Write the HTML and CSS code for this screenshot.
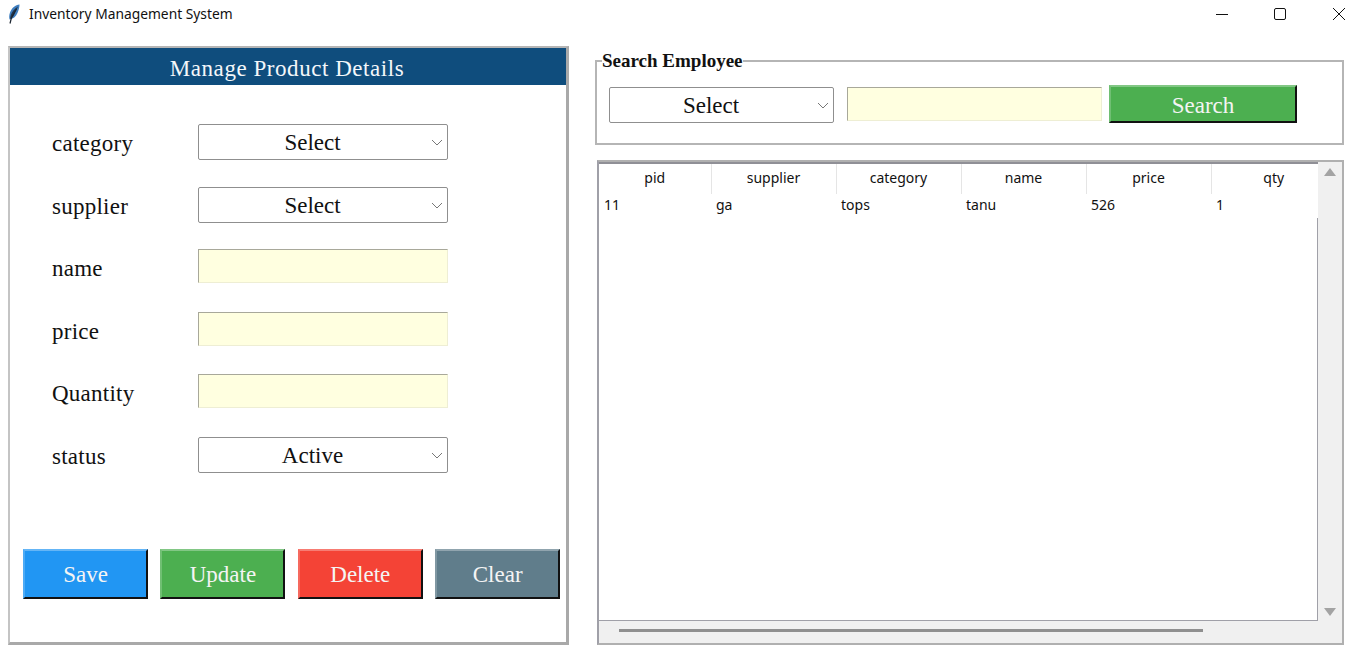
FILE: index.html
```html
<!DOCTYPE html>
<html lang="en">
<head>
    <meta charset="UTF-8">
    <meta name="viewport" content="width=device-width, initial-scale=1.0">
    <title>Inventory Management System</title>
    <link rel="stylesheet" href="styles.css">
</head>
<body>
    <header class="titlebar">
        <svg class="feather" width="14" height="20" viewBox="0 0 14 20">
            <path d="M12.5 0.5 C8.5 1 4.5 4 3 8.5 C2 11.5 2 13.5 2.6 15.5 C6 15 9 12.5 10.5 9 C11.8 6 12.5 3 12.5 0.5 Z" fill="#3f7fc0"/>
            <path d="M11 2.5 C7.5 4.5 5 7.5 3.8 11 C3.3 12.6 3.2 14 3.4 15 C6 14 7 11.5 8 9 C9 6.5 10.3 4.5 11 2.5 Z" fill="#22364e"/>
            <path d="M9.5 5 L4.5 13.5 L3 19.5" fill="none" stroke="#1c2530" stroke-width="1.2"/>
        </svg>
        <span class="app-title">Inventory Management System</span>
        <div class="window-controls">
            <svg width="12" height="12" viewBox="0 0 12 12"><path d="M0 6.5 H12" stroke="#111" fill="none"/></svg>
            <svg width="12" height="12" viewBox="0 0 12 12"><rect x="0.5" y="0.5" width="11" height="11" rx="1.5" stroke="#111" fill="none"/></svg>
            <svg class="close-icon" width="12" height="12" viewBox="0 0 12 12"><path d="M0 0 L12 12 M12 0 L0 12" stroke="#111" fill="none"/></svg>
        </div>
    </header>

    <main class="content">
        <!-- Product form -->
        <section class="product-panel">
            <h1 class="panel-title">Manage Product Details</h1>
            <form class="product-form">
                <label class="form-label">category</label>
                <div class="select-wrap">
                    <select class="select"><option>Select</option></select>
                    <svg class="chevron" width="12" height="7" viewBox="0 0 12 7"><path d="M1 1 L6 6 L11 1" fill="none" stroke="#777"/></svg>
                </div>
                <label class="form-label">supplier</label>
                <div class="select-wrap">
                    <select class="select"><option>Select</option></select>
                    <svg class="chevron" width="12" height="7" viewBox="0 0 12 7"><path d="M1 1 L6 6 L11 1" fill="none" stroke="#777"/></svg>
                </div>
                <label class="form-label">name</label>
                <input class="text-input" type="text">
                <label class="form-label">price</label>
                <input class="text-input" type="text">
                <label class="form-label">Quantity</label>
                <input class="text-input" type="text">
                <label class="form-label">status</label>
                <div class="select-wrap">
                    <select class="select"><option>Active</option></select>
                    <svg class="chevron" width="12" height="7" viewBox="0 0 12 7"><path d="M1 1 L6 6 L11 1" fill="none" stroke="#777"/></svg>
                </div>
            </form>
            <div class="button-row">
                <button class="btn btn-blue" type="button">Save</button>
                <button class="btn btn-green" type="button">Update</button>
                <button class="btn btn-red" type="button">Delete</button>
                <button class="btn btn-grey" type="button">Clear</button>
            </div>
        </section>

        <div class="right-column">
            <!-- Search box -->
            <fieldset class="search-box">
                <legend class="search-legend">Search Employee</legend>
                <div class="select-wrap search-select">
                    <select class="select"><option>Select</option></select>
                    <svg class="chevron" width="12" height="7" viewBox="0 0 12 7"><path d="M1 1 L6 6 L11 1" fill="none" stroke="#777"/></svg>
                </div>
                <input class="text-input search-input" type="text">
                <button class="btn btn-green search-btn" type="button">Search</button>
            </fieldset>

            <!-- Product table -->
            <section class="table-frame">
                <div class="table-area">
                    <table class="product-table">
                        <thead>
                            <tr><th>pid</th><th>supplier</th><th>category</th><th>name</th><th>price</th><th>qty</th></tr>
                        </thead>
                        <tbody>
                            <tr><td>11</td><td>ga</td><td>tops</td><td>tanu</td><td>526</td><td>1</td></tr>
                        </tbody>
                    </table>
                </div>
                <div class="vscroll">
                    <svg width="12" height="8" viewBox="0 0 12 8"><path d="M6 0 L12 8 H0 Z" fill="#a3a3a3"/></svg>
                    <svg width="12" height="8" viewBox="0 0 12 8"><path d="M0 0 H12 L6 8 Z" fill="#a3a3a3"/></svg>
                </div>
                <div class="hscroll"><div class="hscroll-thumb"></div></div>
                <div class="scroll-corner"></div>
            </section>
        </div>
    </main>
</body>
</html>
```

FILE: styles.css
```css
* {
    box-sizing: border-box;
}

html, body {
    height: 100%;
}

body {
    margin: 0;
    background: #fff;
    color: #111;
    font-family: "Liberation Serif", serif;
    overflow: hidden;
}

.titlebar {
    height: 27px;
    display: flex;
    align-items: center;
    padding-left: 7px;
}

.app-title {
    margin-left: 8px;
    font-family: "Noto Sans", sans-serif;
    font-size: 13.8px;
    color: #111;
}

.window-controls {
    margin-left: auto;
    display: flex;
    gap: 46px;
    padding-right: 16px;
}

.close-icon {
    margin-left: 1px;
}

.content {
    display: grid;
    grid-template-columns: 561px 749px;
    column-gap: 26px;
    padding: 19px 0 0 8px;
}

/* left panel */
.product-panel {
    height: 599px;
    border: 2px solid #a9a9a9;
    border-top-color: #b5b5b5;
    border-left-color: #c4c4c4;
    border-right-width: 3px;
    border-bottom-width: 3px;
    display: flex;
    flex-direction: column;
}

.panel-title {
    margin: 0;
    height: 37px;
    line-height: 41px;
    padding-right: 2px;
    background: #0f4d7d;
    color: #f4f7fa;
    font-size: 23px;
    font-weight: normal;
    letter-spacing: 0.55px;
    text-align: center;
}

.product-form {
    display: grid;
    grid-template-columns: 146px 250px;
    grid-auto-rows: 36px;
    row-gap: 26.5px;
    align-items: center;
    padding: 39px 0 0 42px;
}

.form-label {
    padding-top: 4px;
    font-size: 23px;
    letter-spacing: 0.25px;
    color: #111;
}

.select-wrap {
    position: relative;
    height: 36px;
}

.select {
    appearance: none;
    width: 100%;
    height: 100%;
    padding: 1px 21px 0 0;
    background: #fff;
    border: 1px solid #8f8f8f;
    border-radius: 2px;
    font-family: inherit;
    font-size: 23px;
    color: #111;
    text-align-last: center;
}

.chevron {
    position: absolute;
    top: 15px;
    right: 5px;
}

.text-input {
    height: 34px;
    width: 100%;
    background: #ffffe0;
    border: 1px solid #eeeed4;
    border-top-color: #a8a89a;
    border-left-color: #a8a89a;
    align-self: start;
}

.button-row {
    display: flex;
    gap: 12.4px;
    padding: 76px 0 0 13px;
}

.btn {
    width: 125px;
    height: 50px;
    padding: 2px 0 0;
    border: 2px solid;
    border-color: rgba(255, 255, 255, 0.3) #111 #111 rgba(255, 255, 255, 0.2);
    border-radius: 0;
    color: #f4f4f4;
    font-family: inherit;
    font-size: 23px;
}

.btn-blue { background: #2196f3; }
.btn-green { background: #4caf50; }
.btn-red { background: #f44336; }
.btn-grey { background: #607d8b; }

/* right side */
.right-column {
    display: flex;
    flex-direction: column;
    min-width: 0;
}

.search-box {
    margin: 4px 0 15px 0;
    height: 95px;
    padding: 13px 0 0 12px;
    border: 2px solid #b5b5b5;
    border-radius: 0;
    display: flex;
    align-items: flex-start;
    min-width: 0;
}

.search-legend {
    padding: 0;
    margin-left: -7px;
    font-size: 19px;
    font-weight: bold;
    line-height: 22px;
}

.search-select {
    width: 225px;
    margin-top: 2px;
}

.search-input {
    width: 255px;
    margin: 2px 7px 0 13px;
}

.search-btn {
    width: 188px;
    height: 38px;
    padding-top: 4px;
}

.table-frame {
    height: 485px;
    margin-left: 2px;
    border: 2px solid #b0b0b0;
    border-left-color: #a0a0a8;
    background: #f0f0f0;
    display: grid;
    grid-template-columns: minmax(0, 1fr) 24px;
    grid-template-rows: minmax(0, 1fr) 22px;
}

.table-area {
    position: relative;
    overflow: hidden;
    background: #fff;
    border-top: 2px solid #8f8f96;
    border-bottom: 1px solid #a0a0a8;
}

/* the line beside the rows starts under the first row */
.table-area::after {
    content: "";
    position: absolute;
    top: 54px;
    bottom: 0;
    right: 0;
    width: 1px;
    background: #a0a0a8;
}

.product-table {
    width: 737px;
    border-collapse: collapse;
    table-layout: fixed;
    font-family: "Noto Sans", sans-serif;
    font-size: 14px;
}

.product-table th {
    width: 125px;
    height: 30px;
    padding: 0 0 4px;
    font-weight: normal;
    text-align: center;
    border-right: 1px solid #e5e5e5;
}

.product-table th:first-child {
    width: 112px;
}

.product-table th:last-child {
    border-right: 0;
}

.product-table td {
    height: 24px;
    padding: 0 0 4px 5px;
    background: #fff;
}

.vscroll {
    display: flex;
    flex-direction: column;
    justify-content: space-between;
    align-items: center;
    padding: 6px 0 5px;
}

.hscroll {
    padding: 8px 0 0 20px;
}

.hscroll-thumb {
    width: 584px;
    height: 3px;
    background: #8f8f8f;
}

.scroll-corner {
    background: #f0f0f0;
}
```
